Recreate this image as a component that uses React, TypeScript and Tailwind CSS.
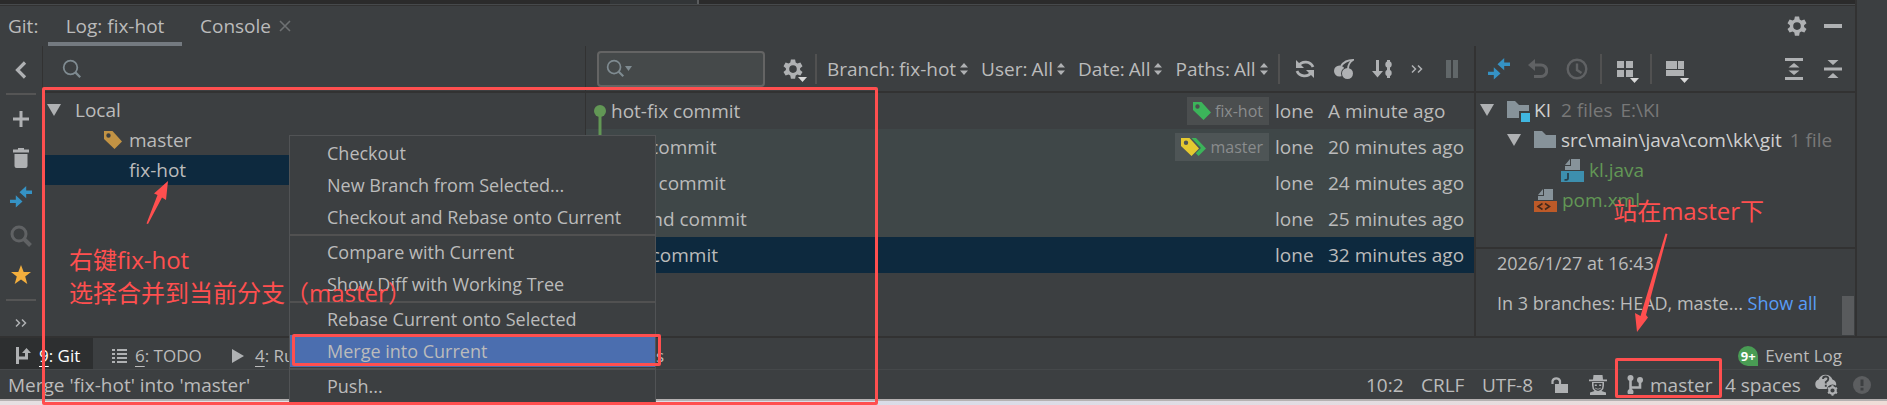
import type { ReactNode } from 'react';

type IconProps = { children: ReactNode; className?: string; box?: string };

function Icon({ children, className = 'size-6', box = '0 0 24 24' }: IconProps) {
  return (
    <svg viewBox={box} className={`shrink-0 ${className}`} fill="currentColor" aria-hidden="true">
      {children}
    </svg>
  );
}

function Magnifier({ className = 'size-5' }: { className?: string }) {
  return (
    <Icon box="0 0 20 20" className={className}>
      <circle cx="8.5" cy="8.5" r="6.8" fill="none" stroke="currentColor" strokeWidth="1.8" />
      <path d="M12.6 14.2 L14.2 12.6 L19 17.4 L17.4 19Z" />
    </Icon>
  );
}

const gearPath =
  'M9.9 2.5h4.2l.6 3.1 1.700 1 3-1 2.100 3.600-2.400 2.100v1.600l2.400 2.100-2.100 3.600-3-1-1.700 1-.6 3.100H9.900l-.6-3.100-1.700-1-3 1-2.100-3.600 2.400-2.100v-1.600L2.500 9.200l2.100-3.600 3 1 1.700-1zM12 8.300a3.800 3.800 0 1 0 0 7.600 3.800 3.800 0 0 0 0-7.600z';

function Gear({ className }: { className?: string }) {
  return (
    <Icon className={className} box="1 1 22 22">
      <path fillRule="evenodd" d={gearPath} />
    </Icon>
  );
}

function Compare() {
  return (
    <Icon className="size-6 text-[#3592c4]">
      <path d="M23 5.600v3.400h-5.800v4.200L10.500 7.300 17.200 1v4.600z" />
      <path d="M1 14.700v3.400h5.800v4.400L13.500 16.400 6.800 10.300v4.400z" />
    </Icon>
  );
}

function Chevrons() {
  return (
    <Icon box="0 0 12 10" className="h-[10px] w-3">
      <path d="M1 1.500 4.500 5 1 8.500M7 1.500 10.500 5 7 8.500" fill="none" stroke="currentColor" strokeWidth="1.500" />
    </Icon>
  );
}

function UpDown() {
  return (
    <Icon box="0 0 8 12" className="h-3 w-2">
      <path d="M4 0 8 4.500H0zM4 12 0 7.500h8z" />
    </Icon>
  );
}

function Expanded() {
  return (
    <Icon box="0 0 14 12" className="h-3 w-[14px]">
      <path d="M0 0h14L7 12z" />
    </Icon>
  );
}

function Tag({ className = 'text-[#c29344]' }: { className?: string }) {
  return (
    <Icon box="0 0 18 18" className={`size-[18px] ${className}`}>
      <path fillRule="evenodd" d="M0 0h8.500L18 10.500 10.500 18 0 8zM4.500 2.300a2.200 2.200 0 1 0 0 4.400 2.200 2.200 0 0 0 0-4.400z" />
    </Icon>
  );
}

function DoubleTag() {
  return (
    <Icon box="0 0 25 18" className="h-[18px] w-[25px]">
      <path fill="#3cb45a" d="M9 0h6l10 10.500L17.500 18 8 8z" />
      <path fill="#4c5556" d="M8.500 0h2L20 10 12 18z" />
      <path fill="#e5c930" fillRule="evenodd" d="M0 0h8.500L18 10.500 10.500 18 0 8zM5 2.600a2.200 2.200 0 1 0 0 4.400 2.200 2.200 0 0 0 0-4.400z" />
    </Icon>
  );
}

function Folder({ module = false }: { module?: boolean }) {
  return (
    <Icon box="0 0 24 24" className="size-6 text-[#87939a]">
      <path d="M1 3h8l4 4h10v13H1z" />
      {module && (
        <>
          <path d="M13 13h11v11H13z" fill="#3c3f41" />
          <path d="M15 15h9v9h-9z" fill="#40b6e0" />
        </>
      )}
    </Icon>
  );
}

function FileIcon({ kind }: { kind: 'java' | 'xml' }) {
  return (
    <Icon box="0 0 24 24" className="size-6">
      <path d="M10 1h9v11H4V8h6zM9 1v6H4z" fill="#87939a" />
      {kind === 'java' ? (
        <>
          <path d="M0 13h23v11H0z" fill="#3d8fae" />
          <path d="M7 15v5.500q0 1.700-3.500 1.400" fill="none" stroke="#26414d" strokeWidth="1.800" />
        </>
      ) : (
        <>
          <path d="M0 13h23v11H0z" fill="#bd5a28" />
          <path d="M8.500 15.500 4 18.500l4.500 3M11 15.500l4.500 3-4.500 3" fill="none" stroke="#46291b" strokeWidth="1.600" />
        </>
      )}
    </Icon>
  );
}

function MenuMark({ children }: { children: ReactNode }) {
  return (
    <Icon className="size-7" box="0 0 28 28">
      {children}
      <path d="M18 23h9l-4.500 5z" fill="#d8d8d8" />
    </Icon>
  );
}

function Divider() {
  return <span className="h-[30px] w-[2px] shrink-0 bg-[#515151]" />;
}

function Tool({ label, width, children }: { label: string; width: string; children: ReactNode }) {
  return (
    <button type="button" aria-label={label} className={`flex h-9 shrink-0 items-center justify-center ${width}`}>
      {children}
    </button>
  );
}

const commits = [
  { message: 'hot-fix commit', author: 'lone', date: 'A minute ago', tag: 'fix-hot' },
  { message: 'test commit', author: 'lone', date: '20 minutes ago', tag: 'master' },
  { message: 'third commit', author: 'lone', date: '24 minutes ago' },
  { message: 'second commit', author: 'lone', date: '25 minutes ago' },
  { message: 'first commit', author: 'lone', date: '32 minutes ago' },
];

const rowColors = ['', 'bg-[#3f4748]', 'bg-[#3f4748]', 'bg-[#3f4748]', 'bg-[#0d293e]'];

const filters = [
  { name: 'Branch:', value: 'fix-hot' },
  { name: 'User:', value: 'All' },
  { name: 'Date:', value: 'All' },
  { name: 'Paths:', value: 'All' },
];

const menuGroups = [
  ['Checkout', 'New Branch from Selected...', 'Checkout and Rebase onto Current'],
  ['Compare with Current', 'Show Diff with Working Tree'],
  ['Rebase Current onto Selected', 'Merge into Current'],
  ['Push...'],
];

function Header() {
  return (
    <header className="flex h-10 items-stretch">
      <span className="flex w-12 items-center pl-2">Git:</span>
      <nav className="flex">
        <button type="button" className="w-[134px] border-b-4 border-[#747a80] pt-1 text-center">
          Log: fix-hot
        </button>
        <button type="button" className="ml-[18px] flex items-center gap-2">
          Console
          <Icon box="0 0 12 12" className="size-3 text-[#6e7173]">
            <path d="M1 1l10 10M11 1 1 11" stroke="currentColor" strokeWidth="1.600" />
          </Icon>
        </button>
      </nav>
      <div className="ml-auto flex items-center pr-1">
        <Tool label="Settings" width="w-9">
          <Gear className="size-[22px] text-[#afb1b3]" />
        </Tool>
        <Tool label="Hide" width="w-9">
          <span className="h-1 w-[18px] bg-[#afb1b3]" />
        </Tool>
      </div>
    </header>
  );
}

function SideBar() {
  return (
    <aside className="flex w-[42px] shrink-0 flex-col items-center text-[#afb1b3]">
      <div className="flex h-[47px] items-center">
        <Tool label="Collapse" width="w-9">
          <Icon box="0 0 12 18" className="h-[18px] w-3">
            <path d="M10 1.500 2.500 9l7.500 7.500" fill="none" stroke="currentColor" strokeWidth="3.200" />
          </Icon>
        </Tool>
      </div>
      <span className="h-[2px] w-[30px] bg-[#555555]" />
      <div className="mt-[6px] flex flex-col items-center gap-[3px]">
        <Tool label="New branch" width="w-9">
          <Icon className="size-4" box="0 0 16 16">
            <path d="M6.500 0h3v6.500H16v3H9.500V16h-3V9.500H0v-3h6.500z" />
          </Icon>
        </Tool>
        <Tool label="Delete" width="w-9">
          <Icon className="h-5 w-4" box="0 0 16 20">
            <path d="M0 1.500h5V0h6v1.500h5v3H0zM1.500 6h13v12q0 2-2 2h-9q-2 0-2-2z" />
          </Icon>
        </Tool>
        <Tool label="Compare" width="w-9">
          <Compare />
        </Tool>
        <Tool label="Search" width="w-9">
          <Icon className="size-[22px] text-[#606264]" box="0 0 22 22">
            <circle cx="9" cy="9" r="7" fill="none" stroke="currentColor" strokeWidth="3" />
            <path d="M13.500 13.500 20.500 20.500" stroke="currentColor" strokeWidth="4" />
          </Icon>
        </Tool>
        <Tool label="Favorites" width="w-9">
          <Icon className="size-5 text-[#f4af3d]" box="0 0 20 20">
            <path d="M10 0l2.700 7H20l-5.800 4.500L16.300 19 10 14.500 3.700 19l2.100-7.500L0 7h7.300z" />
          </Icon>
        </Tool>
      </div>
      <span className="mt-[6px] h-[2px] w-[30px] bg-[#555555]" />
      <button type="button" aria-label="More" className="mt-2 flex h-6 w-9 items-center justify-center pt-1">
        <Chevrons />
      </button>
    </aside>
  );
}

function BranchPane() {
  return (
    <section className="flex w-[543px] shrink-0 flex-col border-l border-[#323232]">
      <label className="flex h-[47px] items-center border-b-2 border-[#323232] pl-[19px]">
        <Magnifier className="size-5 text-[#7f8b91]" />
        <input type="text" aria-label="Search branches" className="ml-2 min-w-0 flex-1 bg-transparent outline-none" />
      </label>
      <ul className="pt-[2px]">
        <li className="flex h-[30px] items-center pl-1">
          <span className="text-[#afb1b3]">
            <Expanded />
          </span>
          <span className="ml-[14px]">Local</span>
        </li>
        <li className="flex h-[30px] items-center pl-[61px]">
          <Tag />
          <span className="ml-[7px]">master</span>
        </li>
        <li className="flex h-[30px] items-center bg-[#0d293e] pl-[86px]">fix-hot</li>
      </ul>
    </section>
  );
}

function LogPane() {
  return (
    <section className="flex min-w-0 flex-1 flex-col border-l border-[#323232]">
      <div className="flex h-[47px] items-center border-b-2 border-[#323232] text-[#afb1b3]">
        <label className="ml-[11px] flex h-9 w-[168px] items-center rounded-[4px] border-2 border-[#646464] bg-[#45494a] pl-[7px]">
          <Magnifier className="size-[19px] text-[#7f8b91]" />
          <Icon box="0 0 7 5" className="h-[5px] w-[7px] text-[#7f8b91]">
            <path d="M0 0h7L3.500 5z" />
          </Icon>
          <input type="text" aria-label="Search commits" className="min-w-0 flex-1 bg-transparent outline-none" />
        </label>
        <span className="ml-2">
          <Tool label="Log settings" width="w-[42px]">
            <Icon className="size-7" box="0 0 28 28">
              <path fillRule="evenodd" d={gearPath} transform="translate(1 2)" />
              <path d="M18 22h9l-4.500 5z" fill="#d8d8d8" />
            </Icon>
          </Tool>
        </span>
        <Divider />
        <div className="ml-[10px] flex gap-[13px] text-[#bbbbbb]">
          {filters.map((f) => (
            <label key={f.name} className="flex items-center whitespace-nowrap">
              {f.name}
              <select className="ml-1 mr-1 appearance-none bg-transparent field-sizing-content outline-none">
                <option>{f.value}</option>
              </select>
              <span className="text-[#afb1b3]">
                <UpDown />
              </span>
            </label>
          ))}
        </div>
        <div className="ml-auto flex items-center pr-[3px]">
          <Divider />
          <span className="w-[5px]" />
          <Tool label="Refresh" width="w-[39px]">
            <Icon className="size-5" box="0 0 20 20">
              <path d="M3.500 7A8 7.500 0 0 1 18 8M16.500 13A8 7.500 0 0 1 2 12" fill="none" stroke="currentColor" strokeWidth="2.800" />
              <path d="M1 1v8h8zM19 19v-8h-8z" />
            </Icon>
          </Tool>
          <Tool label="Cherry-pick" width="w-[39px]">
            <Icon className="size-5" box="0 0 20 20">
              <circle cx="5.500" cy="12" r="5.500" />
              <circle cx="13.500" cy="14.500" r="6.500" fill="#3c3f41" />
              <circle cx="13.500" cy="14.500" r="5.500" />
              <path d="M7 7Q11 1 19 1Q14 4 14 10" fill="none" stroke="currentColor" strokeWidth="1.800" />
            </Icon>
          </Tool>
          <Tool label="Sort" width="w-[38px]">
            <Icon className="size-5" box="0 0 20 20">
              <path d="M4 1h3v11h4l-5.500 6.500L0 12h4zM15 1h3v18h-3z" />
              <circle cx="16.500" cy="5.500" r="3.200" />
              <circle cx="16.500" cy="14" r="3.200" />
            </Icon>
          </Tool>
          <Tool label="More actions" width="w-8">
            <Chevrons />
          </Tool>
          <Tool label="Details" width="w-[38px]">
            <span className="flex gap-[2px]">
              <span className="h-[18px] w-[5px] bg-[#616769]" />
              <span className="h-[18px] w-[5px] bg-[#616769]" />
            </span>
          </Tool>
        </div>
      </div>
      <div className="relative">
        <table className="w-full border-collapse">
          <tbody>
            {commits.map((c, i) => (
              <tr key={c.date} className={`h-9 ${rowColors[i]}`}>
                <td className="p-0 pl-[25px]">{c.message}</td>
                <td className="w-[110px] p-0">
                  {c.tag && (
                    <span className="float-right flex h-7 items-center gap-1 bg-[#ffffff14] px-[6px] text-[16px] text-[#8a8c8d]">
                      {c.tag === 'master' ? <DoubleTag /> : <Tag className="text-[#3cb45a]" />}
                      {c.tag}
                    </span>
                  )}
                </td>
                <td className="w-[59px] p-0 pl-[6px]">{c.author}</td>
                <td className="w-[146px] whitespace-nowrap p-0">{c.date}</td>
              </tr>
            ))}
          </tbody>
        </table>
        <svg className="absolute left-[8px] top-[12px] h-[156px] w-3" viewBox="0 0 12 156" aria-hidden="true">
          <path d="M6 6v144" stroke="#629755" strokeWidth="3" />
          <circle cx="6" cy="6" r="6" fill="#629755" />
        </svg>
      </div>
    </section>
  );
}

function DetailsPane() {
  return (
    <section className="flex w-[381px] shrink-0 flex-col border-l-2 border-[#323232]">
      <div className="flex h-[47px] shrink-0 items-center border-b-2 border-[#323232] pl-[3px] pr-[3px] text-[#afb1b3]">
        <Tool label="Show diff" width="w-[39px]">
          <Compare />
        </Tool>
        <Tool label="Revert" width="w-[39px]">
          <Icon className="size-5 text-[#606264]" box="0 0 20 20">
            <path d="M4 6h9a5.500 5.500 0 0 1 0 11.500H6" fill="none" stroke="currentColor" strokeWidth="3" />
            <path d="M7 0v12L0 6z" />
          </Icon>
        </Tool>
        <Tool label="History" width="w-[39px]">
          <Icon className="size-[22px] text-[#606264]" box="0 0 22 22">
            <circle cx="11" cy="11" r="9.300" fill="none" stroke="currentColor" strokeWidth="2.400" />
            <path d="M11 5.500V12l4.500 3" fill="none" stroke="currentColor" strokeWidth="2.400" />
          </Icon>
        </Tool>
        <span className="w-1" />
        <Divider />
        <span className="w-1" />
        <Tool label="Group by" width="w-10">
          <MenuMark>
            <path d="M5 6h7v7H5zM14 6h7v7h-7zM5 15h7v7H5zM14 15h7v7h-7z" />
          </MenuMark>
        </Tool>
        <span className="w-1" />
        <Divider />
        <span className="w-1" />
        <Tool label="Layout" width="w-10">
          <MenuMark>
            <path d="M4 6h11v8H4zM16 6h6v8h-6zM4 15h18v6H4z" />
          </MenuMark>
        </Tool>
        <div className="ml-auto flex">
          <Tool label="Expand all" width="w-[39px]">
            <Icon className="h-[22px] w-[18px]" box="0 0 18 22">
              <path d="M0 0h18v3H0zM0 19h18v3H0zM9 5l5.500 4.500h-11zM9 17l5.500-4.500h-11z" />
            </Icon>
          </Tool>
          <Tool label="Collapse all" width="w-[39px]">
            <Icon className="h-[22px] w-[18px]" box="0 0 18 22">
              <path d="M0 9.500h18v3H0zM9 7l5.500-5h-11zM9 15l5.500 5h-11z" />
            </Icon>
          </Tool>
        </div>
      </div>
      <ul className="flex-1 pt-[2px] text-[#d0d0d0]">
        <li className="flex h-[30px] items-center pl-1">
          <span className="text-[#afb1b3]">
            <Expanded />
          </span>
          <span className="ml-3 mr-1">
            <Folder module />
          </span>
          KI
          <span className="ml-[10px] text-[#787878]">2 files</span>
          <span className="ml-2 text-[#787878]">E:\KI</span>
        </li>
        <li className="flex h-[30px] items-center pl-[31px]">
          <span className="text-[#afb1b3]">
            <Expanded />
          </span>
          <span className="ml-3 mr-1">
            <Folder />
          </span>
          src\main\java\com\kk\git
          <span className="ml-2 text-[#787878]">1 file</span>
        </li>
        <li className="flex h-[30px] items-center gap-1 pl-[85px] text-[#629755]">
          <FileIcon kind="java" />
          kl.java
        </li>
        <li className="flex h-[30px] items-center gap-1 pl-[58px] text-[#629755]">
          <FileIcon kind="xml" />
          pom.xml
        </li>
      </ul>
      <div className="flex h-[89px] shrink-0 items-end border-t-2 border-[#323232] text-[18px]">
        <div className="flex flex-1 flex-col gap-3 self-start whitespace-nowrap pl-[21px]">
          <p className="leading-7">2026/1/27 at 16:43</p>
          <p className="leading-7">
            In 3 branches: HEAD, maste...{' '}
            <a href="#branches" className="text-[#589df6]">
              Show all
            </a>
          </p>
        </div>
        <span className="mb-px mr-px h-[39px] w-3 shrink-0 bg-[#595b5d]" />
      </div>
    </section>
  );
}

function ToolStripe() {
  return (
    <nav className="flex h-8 items-stretch border-b border-[#45484a] text-[17px]">
      <button type="button" className="flex w-[93px] items-center gap-2 bg-[#2d2f30] pl-4 pt-1 text-white">
        <Icon className="h-[17px] w-[15px] text-[#afb1b3]" box="0 0 15 17">
          <path d="M0 0h3v9.500h6V6H6l4.500-5L15 6h-3v6.500H3V17H0z" />
        </Icon>
        <span>
          <u className="underline-offset-4">9</u>: Git
        </span>
      </button>
      <button type="button" className="ml-[19px] flex w-[120px] items-center gap-2 pt-1">
        <Icon className="size-[15px] text-[#afb1b3]" box="0 0 15 15">
          <path d="M0 1h3v2H0zM5 1h10v2H5zM0 5h3v2H0zM5 5h10v2H5zM0 9h3v2H0zM5 9h10v2H5zM0 13h3v2H0zM5 13h10v2H5z" />
        </Icon>
        <span>
          <u className="underline-offset-4">6</u>: TODO
        </span>
      </button>
      <button type="button" className="flex w-[120px] items-center gap-[11px] pt-1">
        <Icon className="h-[14px] w-3 text-[#afb1b3]" box="0 0 12 14">
          <path d="M0 0v14l12-7z" />
        </Icon>
        <span>
          <u className="underline-offset-4">4</u>: Run
        </span>
      </button>
      <button type="button" className="w-[312px] pt-1 text-right">
        Messages
      </button>
      <button type="button" className="ml-auto flex items-center gap-[7px] pr-[45px] pt-1">
        <span className="flex size-5 items-center justify-center rounded-t-full rounded-bl-full bg-[#499c54] text-[13px] font-bold text-white">
          9+
        </span>
        Event Log
      </button>
    </nav>
  );
}

function StatusBar() {
  return (
    <footer className="flex h-[29px] items-center whitespace-nowrap pl-2 pr-4">
      <span>Merge 'fix-hot' into 'master'</span>
      <div className="ml-auto flex items-center">
        <span className="w-[55px]">10:2</span>
        <span className="w-[61px]">CRLF</span>
        <span className="w-[69px]">UTF-8</span>
        <span className="w-[38px] text-[#afb1b3]">
          <Icon className="h-[18px] w-[17px]" box="0 0 17 18">
            <path d="M1.500 8V5a4 4 0 0 1 7.500 0v3" fill="none" stroke="currentColor" strokeWidth="2.200" />
            <path d="M4 8h13v9H4z" />
          </Icon>
        </span>
        <span className="w-[38px] text-[#afb1b3]">
          <Icon className="h-5 w-[18px]" box="0 0 18 20">
            <path d="M4.500 0h9l.5 4.500h4v1.700H0V4.500h4z" />
            <path d="M3 7h12v3.500q0 3.500-2.500 5.500l4.500 1.500V20H1v-2.500L5.500 16Q3 14 3 10.500z" />
            <path d="M4.600 8h8.800v2.500q0 4.500-4.400 5.500-4.400-1-4.400-5.500z" fill="#3c3f41" />
            <path d="M5.800 9.500h2v1.600h-2zM10.200 9.500h2v1.600h-2zM6.300 12.500q2.700 2.500 5.400 0v1q-2.700 2-5.400 0z" />
          </Icon>
        </span>
        <button type="button" className="flex w-[98px] items-center gap-[7px]">
          <Icon className="h-[19px] w-4 text-[#afb1b3]" box="0 0 16 19">
            <circle cx="3.500" cy="3" r="3" />
            <circle cx="13" cy="5" r="3" />
            <circle cx="3.500" cy="17" r="3" />
            <path d="M3.500 3v14M3.500 12.500H13V5" fill="none" stroke="currentColor" strokeWidth="2.600" />
          </Icon>
          master
        </button>
        <span className="w-[89px]">4 spaces</span>
        <span className="w-[39px] text-[#afb1b3]">
          <Icon className="h-[22px] w-6" box="0 0 24 22">
            <path d="M5 15A5 5 0 0 1 4.500 5.500 7.500 7.500 0 0 1 18.500 5.500 5 5 0 0 1 22 12L14 15z" />
            <path d="M9 5q0-2.500 2.700-2.500T14.300 5q0 1.500-2.500 3v1.500M11.800 10.800v2" fill="none" stroke="#3c3f41" strokeWidth="1.900" />
            <circle cx="18.500" cy="16.500" r="6" fill="#3c3f41" />
            <circle cx="18.500" cy="16.500" r="3.200" fill="none" stroke="currentColor" strokeWidth="2.200" />
            <path d="M18.500 11.200v2M18.500 19.800v2M14 13.900l1.600 1M21.400 18.200l1.600 1M14 19.100l1.600-1M21.400 14.900l1.600-1" stroke="currentColor" strokeWidth="2" />
          </Icon>
        </span>
        <Icon className="size-[18px]" box="0 0 18 18">
          <circle cx="9" cy="9" r="9" fill="#5c5e60" />
          <path d="M7.500 3.500h3V10h-3zM7.500 11.700h3v2.800h-3z" fill="#3c3f41" />
        </Icon>
      </div>
    </footer>
  );
}

function ContextMenu() {
  return (
    <div
      role="menu"
      className="absolute bottom-0 left-[289px] top-[135px] w-[367px] overflow-hidden border-x border-t border-[#515355] bg-[#3c3f41] pt-px text-[18px]"
    >
      {menuGroups.map((group, i) => (
        <div key={group[0]} className={i === 0 ? '' : 'mt-px border-t-2 border-[#515151]'}>
          {group.map((item) => (
            <button
              key={item}
              type="button"
              role="menuitem"
              className={`block h-8 w-full pl-[37px] text-left ${item === 'Merge into Current' ? 'bg-[#4b6eaf]' : ''}`}
            >
              {item}
            </button>
          ))}
        </div>
      ))}
    </div>
  );
}

function Annotations() {
  return (
    <div className="pointer-events-none absolute inset-0 font-['Open_Sans','Noto_Sans_CJK_SC',sans-serif] text-[24px] leading-[33px] text-[#ff4f4f]">
      <div className="absolute bottom-0 left-[42px] top-[87px] w-[836px] rounded-[2px] border-[3px] border-[#ff4f4f]" />
      <div className="absolute left-[292px] top-[334px] h-8 w-[369px] rounded-[2px] border-[3px] border-[#ff4f4f]" />
      <div className="absolute right-[165px] top-[358px] h-10 w-[107px] rounded-[2px] border-[3px] border-[#ff4f4f]" />
      <p className="absolute left-[69px] top-[243px] whitespace-nowrap">
        右键fix-hot
        <br />
        选择合并到当前分支（master）
      </p>
      <p className="absolute right-[123px] top-[194px] whitespace-nowrap">站在master下</p>
      <svg className="absolute left-[144px] top-[180px] h-[46px] w-7" viewBox="0 0 28 46" fill="#ff4f4f" aria-hidden="true">
        <path d="M24 1 22 20 18 17.500 4 44 2.500 43.500 13.500 15 10 13.500z" />
      </svg>
      <svg className="absolute right-[218px] top-[232px] h-[102px] w-9" viewBox="0 0 36 102" fill="#ff4f4f" aria-hidden="true">
        <path d="M32.500 1.500 34.500 2 13 83 15 85.500 4 100 2 81 7.500 84z" />
      </svg>
    </div>
  );
}

export default function App() {
  return (
    <div className="relative flex min-h-screen flex-col overflow-hidden bg-[#3c3f41] font-['Open_Sans','Noto_Sans_CJK_SC',sans-serif] text-[19px] leading-6 text-[#bbbbbb]">
      <div className="flex flex-1">
        <main className="flex min-w-0 flex-1 flex-col">
          <div className="flex h-1 bg-[#2b2b2b]">
            <span className="ml-[610px] w-[87px] bg-[#323537]" />
            <span className="w-[2px] bg-[#5a5c5e]" />
          </div>
          <div className="h-[2px] border-t border-[#46494b] bg-[#323232]" />
          <Header />
          <div className="flex flex-1">
            <SideBar />
            <BranchPane />
            <LogPane />
            <DetailsPane />
          </div>
        </main>
        <div className="w-8 shrink-0 border-l-2 border-[#323232]" />
      </div>
      <div className="h-[2px] bg-[#323232]" />
      <ToolStripe />
      <StatusBar />
      <div className="h-[6px] border-t-2 border-[#b5b1b1] bg-linear-to-r from-[#e6e0e2] via-[#d9dce8] to-[#f0ddd8]" />
      <ContextMenu />
      <Annotations />
    </div>
  );
}
